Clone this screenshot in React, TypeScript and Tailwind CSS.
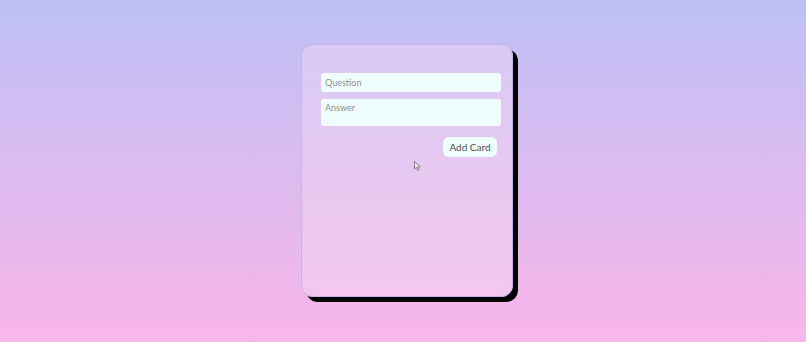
import React from 'react';

export default function App() {
    return (
        <div className="w-[806px] h-[342px] bg-gradient-to-b from-[#bcc0f5] to-[#f9b5ea] flex justify-center pt-[44px] pl-[8px] font-['Lato',sans-serif]">
            <div className="relative w-[212px] h-[253px] rounded-[12px] border border-[#c9b3e6] bg-gradient-to-b from-[#d8cbf4] to-[#f4c6ee] shadow-[5px_5px_0_#000] pt-[28px] pl-[19px] pr-[11px]">
                <form className="flex flex-col" onSubmit={(e) => e.preventDefault()}>
                    <input
                        type="text"
                        placeholder="Question"
                        className="h-[19px] w-full rounded-[3px] bg-[#effffd] px-[4px] text-[9px] text-[#555] placeholder:text-[#8f8f8f] outline-none"
                    />
                    <textarea
                        placeholder="Answer"
                        className="mt-[7px] h-[27px] w-full resize-none rounded-[3px] bg-[#effffd] px-[4px] pt-[3px] text-[9px] leading-[11px] text-[#555] placeholder:text-[#8f8f8f] outline-none"
                    />
                    <div className="flex justify-end pr-[4px] mt-[11px]">
                        <button className="h-[20px] w-[54px] rounded-[6px] bg-[#effffd] text-[10px] text-[#505050]">
                            Add Card
                        </button>
                    </div>
                </form>
                {/* mouse pointer */}
                <svg className="absolute left-[112px] top-[116px]" width="7" height="10" viewBox="0 0 7 10">
                    <path d="M0.5 0.5 L0.5 8 L2.4 6.3 L3.8 9.3 L5 8.8 L3.7 5.9 L6.2 5.9 Z" fill="#fff" stroke="#666" strokeWidth="0.8" />
                </svg>
            </div>
        </div>
    );
}
